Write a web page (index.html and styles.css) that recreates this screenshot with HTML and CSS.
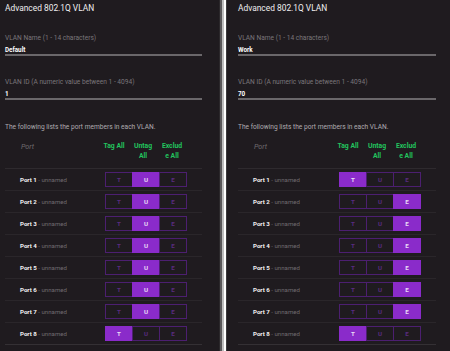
FILE: index.html
```html
<!DOCTYPE html>
<html>
<head>
<meta charset="utf-8">
<link rel="stylesheet" href="styles.css">
</head>
<body>
<div class="screen">
  <section class="panel panel--left">
    <h1 class="title">Advanced 802.1Q VLAN</h1>
    <div class="field">
      <div class="field-label">VLAN Name (1 - 14 characters)</div>
      <div class="field-value">Default</div>
    </div>
    <div class="field">
      <div class="field-label">VLAN ID (A numeric value between 1 - 4094)</div>
      <div class="field-value">1</div>
    </div>
    <p class="intro">The following lists the port members in each VLAN.</p>
    <div class="table">
      <div class="thead">
        <span class="th-port">Port</span>
        <span class="th">Tag All</span>
        <span class="th">Untag All</span>
        <span class="th">Exclude All</span>
      </div>
      <div class="row"><span class="port"><b>Port 1</b> - unnamed</span><div class="seg"><span class="opt">T</span><span class="opt on">U</span><span class="opt">E</span></div></div>
      <div class="row"><span class="port"><b>Port 2</b> - unnamed</span><div class="seg"><span class="opt">T</span><span class="opt on">U</span><span class="opt">E</span></div></div>
      <div class="row"><span class="port"><b>Port 3</b> - unnamed</span><div class="seg"><span class="opt">T</span><span class="opt on">U</span><span class="opt">E</span></div></div>
      <div class="row"><span class="port"><b>Port 4</b> - unnamed</span><div class="seg"><span class="opt">T</span><span class="opt on">U</span><span class="opt">E</span></div></div>
      <div class="row"><span class="port"><b>Port 5</b> - unnamed</span><div class="seg"><span class="opt">T</span><span class="opt on">U</span><span class="opt">E</span></div></div>
      <div class="row"><span class="port"><b>Port 6</b> - unnamed</span><div class="seg"><span class="opt">T</span><span class="opt on">U</span><span class="opt">E</span></div></div>
      <div class="row"><span class="port"><b>Port 7</b> - unnamed</span><div class="seg"><span class="opt">T</span><span class="opt on">U</span><span class="opt">E</span></div></div>
      <div class="row row--last"><span class="port"><b>Port 8</b> - unnamed</span><div class="seg"><span class="opt on">T</span><span class="opt">U</span><span class="opt">E</span></div></div>
    </div>
  </section>
  <div class="divider"></div>
  <section class="panel panel--right">
    <h1 class="title">Advanced 802.1Q VLAN</h1>
    <div class="field">
      <div class="field-label">VLAN Name (1 - 14 characters)</div>
      <div class="field-value">Work</div>
    </div>
    <div class="field">
      <div class="field-label">VLAN ID (A numeric value between 1 - 4094)</div>
      <div class="field-value">70</div>
    </div>
    <p class="intro">The following lists the port members in each VLAN.</p>
    <div class="table">
      <div class="thead">
        <span class="th-port">Port</span>
        <span class="th">Tag All</span>
        <span class="th">Untag All</span>
        <span class="th">Exclude All</span>
      </div>
      <div class="row"><span class="port"><b>Port 1</b> - unnamed</span><div class="seg"><span class="opt on">T</span><span class="opt">U</span><span class="opt">E</span></div></div>
      <div class="row"><span class="port"><b>Port 2</b> - unnamed</span><div class="seg"><span class="opt">T</span><span class="opt">U</span><span class="opt on">E</span></div></div>
      <div class="row"><span class="port"><b>Port 3</b> - unnamed</span><div class="seg"><span class="opt">T</span><span class="opt">U</span><span class="opt on">E</span></div></div>
      <div class="row"><span class="port"><b>Port 4</b> - unnamed</span><div class="seg"><span class="opt">T</span><span class="opt">U</span><span class="opt on">E</span></div></div>
      <div class="row"><span class="port"><b>Port 5</b> - unnamed</span><div class="seg"><span class="opt">T</span><span class="opt">U</span><span class="opt on">E</span></div></div>
      <div class="row"><span class="port"><b>Port 6</b> - unnamed</span><div class="seg"><span class="opt">T</span><span class="opt">U</span><span class="opt on">E</span></div></div>
      <div class="row"><span class="port"><b>Port 7</b> - unnamed</span><div class="seg"><span class="opt">T</span><span class="opt">U</span><span class="opt on">E</span></div></div>
      <div class="row row--last"><span class="port"><b>Port 8</b> - unnamed</span><div class="seg"><span class="opt on">T</span><span class="opt">U</span><span class="opt">E</span></div></div>
    </div>
  </section>
</div>
</body>
</html>
```
FILE: styles.css
```css
* { box-sizing: border-box; }
html, body {
  margin: 0;
  padding: 0;
  background: #ffffff;
  overflow: hidden;
}
.screen {
  display: flex;
  width: 450px;
  height: 351px;
  font-family: Roboto, "Liberation Sans", sans-serif;
}
.panel {
  background: #1f1b1f;
  height: 351px;
  flex: none;
}
.panel--left {
  width: 220px;
  padding: 0 17px 0 5px;
  border-right: 1px solid #2b282b;
}
.panel--right {
  width: 223px;
  padding: 0 14px 0 11px;
}
.divider {
  flex: none;
  width: 7px;
  background: linear-gradient(to right, #5a585a 0 2px, #bdbdbd 2px 4px, #ffffff 4px 6px, #3a383a 6px 7px);
}
.title {
  margin: 0;
  height: 16px;
  line-height: 16px;
  font-size: 8.4px;
  font-weight: 400;
  color: #f0eef0;
}
.field {
  margin-top: 18px;
  border-bottom: 2px solid #6a676a;
}
.field + .field {
  margin-top: 22px;
}
.field-label {
  height: 8px;
  line-height: 8px;
  font-size: 6.6px;
  color: #7a767a;
}
.field-value {
  margin-top: 4px;
  height: 8px;
  line-height: 8px;
  font-size: 6.3px;
  font-weight: 700;
  color: #ffffff;
}
.intro {
  margin: 23px 0 0;
  height: 8px;
  line-height: 8px;
  font-size: 6.6px;
  color: #b0acb0;
}
.table {
  margin-top: 11px;
}
.thead {
  display: flex;
  align-items: flex-start;
  height: 27px;
  border-bottom: 1px solid #2e2a2e;
}
.th-port {
  flex: 1;
  padding-left: 16px;
  line-height: 9px;
  font-size: 7.2px;
  font-style: italic;
  color: #6e6a6e;
}
.th {
  width: 29px;
  padding: 0 3.5px;
  text-align: center;
  line-height: 9.5px;
  font-size: 6.8px;
  font-weight: 700;
  color: #22c55e;
  overflow-wrap: anywhere;
}
.th:last-child {
  margin-right: 15.5px;
}
.row {
  display: flex;
  align-items: center;
  height: 22px;
  border-bottom: 1px solid #2a262a;
}
.row--last {
  border-bottom-color: #343034;
}
.port {
  flex: 1;
  padding-left: 15px;
  font-size: 6.1px;
  color: #6f6b6f;
}
.port b {
  color: #f4f2f4;
  font-weight: 700;
}
.seg {
  display: flex;
  width: 82px;
  height: 15px;
  margin-right: 15px;
}
.opt {
  flex: 1;
  display: flex;
  align-items: center;
  justify-content: center;
  border: 1px solid #4c1f70;
  margin-left: -1px;
  font-size: 6.2px;
  font-weight: 700;
  color: #5a2c80;
}
.opt:first-child {
  margin-left: 0;
}
.opt.on {
  background: #8a2bca;
  border-color: #8a2bca;
  color: #eadcf6;
}
```
